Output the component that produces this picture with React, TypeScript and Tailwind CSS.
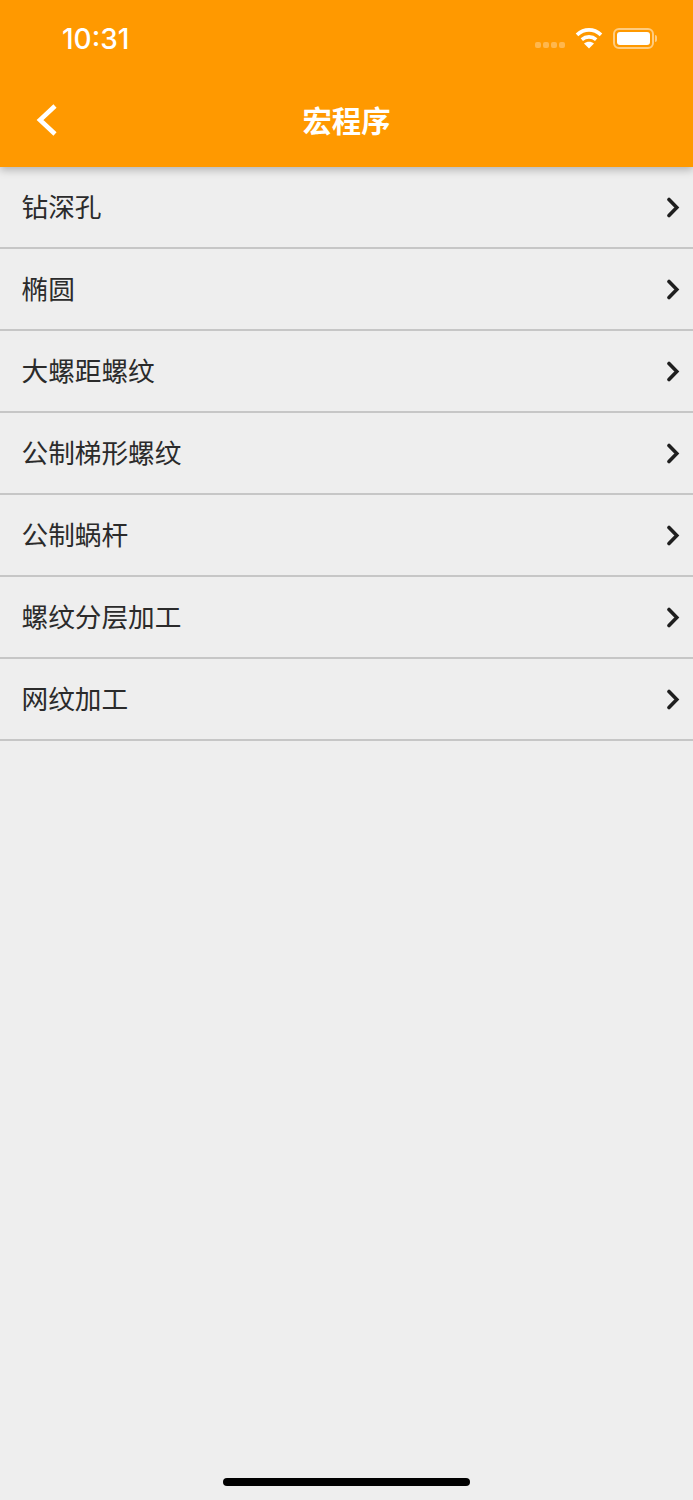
const items = ["钻深孔", "椭圆", "大螺距螺纹", "公制梯形螺纹", "公制蜗杆", "螺纹分层加工", "网纹加工"];

function StatusIcons() {
  return (
    <div className="flex items-center">
      <div className="flex gap-[2px] mt-[13px] mr-[10px]">
        <span className="w-[6px] h-[6px] rounded-[2px] bg-white/30" />
        <span className="w-[6px] h-[6px] rounded-[2px] bg-white/30" />
        <span className="w-[6px] h-[6px] rounded-[2px] bg-white/30" />
        <span className="w-[6px] h-[6px] rounded-[2px] bg-white/30" />
      </div>
      <svg width="28" height="22" viewBox="0 0 28 22" className="mr-[10px] mb-[1px]">
        <path d="M2 7.8C9.4 1.2 18.6 1.2 26 7.8" fill="none" stroke="#fff" strokeWidth="3.8" />
        <path d="M6.8 12.6C11 9 17 9 21.2 12.6" fill="none" stroke="#fff" strokeWidth="3.6" />
        <path d="M14 21.5L9 16.4C12 14.2 16 14.2 19 16.4Z" fill="#fff" />
      </svg>
      <div className="w-[41px] h-[21px] rounded-[6px] border-2 border-white/50 p-[2px] flex">
        <div className="flex-1 rounded-[3px] bg-white" />
      </div>
      <div className="w-[2px] h-[7px] rounded-r-[2px] bg-white/50 ml-[1px]" />
    </div>
  );
}

function Row({ label }: { label: string }) {
  return (
    <div className="h-[82px] flex items-center justify-between pl-[22px] pr-[12px] border-b-2 border-[#c6c6c6]">
      <span className="text-[26.67px] leading-none text-[#2b2b2b] -ml-[0.5px]">{label}</span>
      <svg width="16" height="22" viewBox="0 0 16 22" fill="none" stroke="#1f1f1f" strokeWidth="3.6" strokeLinecap="round" strokeLinejoin="miter">
        <path d="M4 3.5L11.8 11.5L4 19.5" />
      </svg>
    </div>
  );
}

export default function App() {
  return (
    <div className="w-[693px] h-[1500px] flex flex-col bg-[#eeeeee] font-['Inter','Noto_Sans_CJK_SC',sans-serif]">
      <header className="h-[167px] shrink-0 bg-[#ff9900] shadow-[0_3px_8px_rgba(0,0,0,0.25)] z-10 flex flex-col">
        <div className="h-[76px] flex items-center justify-between pl-[62px] pr-[36px]">
          <span className="text-[28px] font-medium leading-none text-white pt-[1px]">10:31</span>
          <StatusIcons />
        </div>
        <div className="relative flex-1 flex items-center justify-center">
          <svg width="24" height="34" viewBox="0 0 24 34" fill="none" stroke="#fff" strokeWidth="4.6" className="absolute left-[35px] top-[27px]">
            <path d="M20 3L5 17L20 31" />
          </svg>
          <h1 className="text-[29.33px] font-bold leading-none text-white">宏程序</h1>
        </div>
      </header>
      <main className="flex-1 flex flex-col">
        {items.map((item) => (
          <Row key={item} label={item} />
        ))}
      </main>
      <div className="flex justify-center pb-[14px]">
        <div className="w-[247px] h-[8px] rounded-full bg-black" />
      </div>
    </div>
  );
}
